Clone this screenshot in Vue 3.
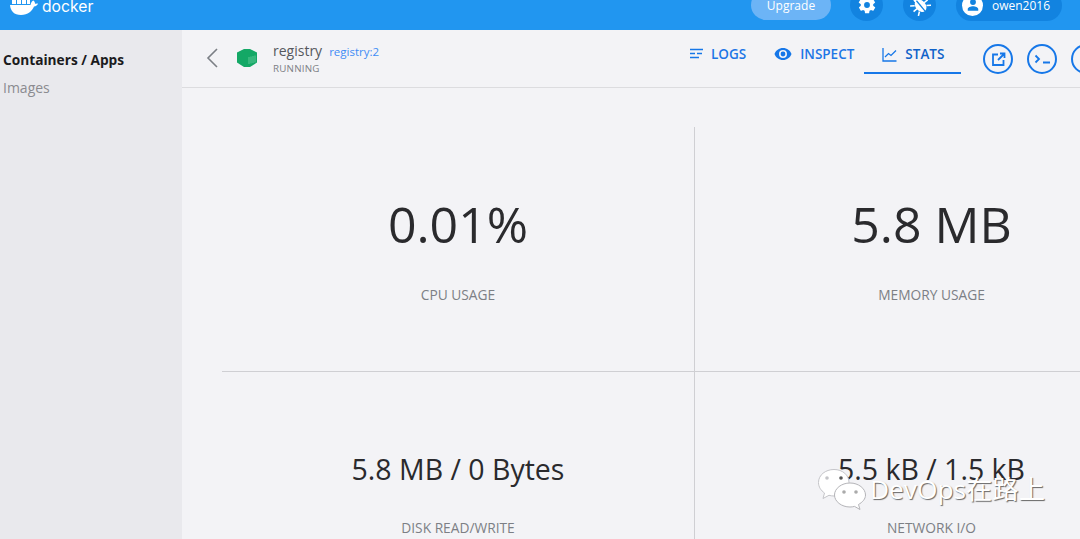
<template>
  <div class="page">
    <header class="topbar">
      <div class="logo">
        <svg class="whale" width="28" height="22" viewBox="0 0 28 22">
          <path d="M0 11h20.500c.5-2.500 1.500-4 3-4.500 1 .8 1.500 2 1.500 3.200l3-.2c-.5 1.800-2 2.800-4 3-2 4.500-6 8.500-13 8.500C4 21 .5 17 0 11z" fill="#fff" />
          <path d="M2 6h4v4H2zM7 6h4v4H7zM12 6h4v4h-4zM17 6h3v4h-3zM7 1h4v4H7zM12 1h4v4h-4z" fill="#fff" />
        </svg>
        <span class="logo-text">docker</span>
      </div>
      <div class="top-actions">
        <div class="upgrade">Upgrade</div>
        <div class="round">
          <svg width="20" height="20" viewBox="0 0 24 24"><path fill="#fff" d="M19.400 13c0-.3.100-.6.100-1s0-.7-.1-1l2.100-1.600c.2-.2.2-.4.1-.6l-2-3.500c-.1-.2-.4-.3-.6-.2l-2.500 1c-.5-.4-1.100-.7-1.700-1l-.4-2.600c0-.3-.2-.4-.5-.4h-4c-.3 0-.5.100-.5.400l-.4 2.600c-.6.300-1.200.6-1.700 1l-2.500-1c-.2-.1-.5 0-.6.200l-2 3.500c-.1.200-.1.400.1.600L4.600 11c0 .3-.1.600-.1 1s0 .7.100 1l-2.100 1.600c-.2.200-.2.400-.1.600l2 3.500c.1.200.4.300.6.200l2.500-1c.5.400 1.100.7 1.700 1l.4 2.600c0 .3.2.4.5.4h4c.3 0 .5-.1.5-.4l.4-2.600c.6-.3 1.200-.6 1.700-1l2.500 1c.2.100.5 0 .6-.2l2-3.500c.1-.2.100-.4-.1-.6zM12 15.500a3.500 3.500 0 1 1 0-7 3.500 3.500 0 0 1 0 7z" /></svg>
        </div>
        <div class="round">
          <svg width="22" height="22" viewBox="0 0 24 24">
            <g transform="rotate(-40 12 12)">
              <ellipse cx="12" cy="13" rx="5.500" ry="7.500" fill="#fff" />
              <circle cx="12" cy="5" r="2.500" fill="#fff" />
              <path d="M7 9 3 6M7 13H2M7 17l-4 3M17 9l4-3M17 13h5M17 17l4 3" stroke="#fff" stroke-width="1.700" fill="none" />
              <path d="M12 6v15" stroke="#1283e0" stroke-width="1.400" />
            </g>
          </svg>
        </div>
        <div class="account">
          <span class="avatar">
            <svg width="14" height="14" viewBox="0 0 24 24"><path fill="#1283e0" d="M12 12a5 5 0 1 0 0-10 5 5 0 0 0 0 10zm0 2c-4 0-9 2-9 5v3h18v-3c0-3-5-5-9-5z" /></svg>
          </span>
          <span>owen2016</span>
        </div>
      </div>
    </header>

    <div class="body">
      <aside class="sidebar">
        <div class="nav-item active">Containers / Apps</div>
        <div class="nav-item">Images</div>
      </aside>

      <main class="main">
        <div class="subbar">
          <svg class="back" width="14" height="22" viewBox="0 0 14 22"><path d="M12 2 3 11l9 9" fill="none" stroke="#7b7f85" stroke-width="1.600" /></svg>
          <svg class="box" width="22" height="18" viewBox="0 0 22 18">
            <path d="M8 0h6l7 3.500v10L14 18H8l-7-4.500v-10z" fill="#14a866" />
            <path d="M13 8v7M15 7.500v7M17 7v7M19 6.500v7" stroke="#63c99b" stroke-width=".9" />
          </svg>
          <div class="title-block">
            <div class="title-line">
              <span class="name">registry</span>
              <span class="tag">registry:2</span>
            </div>
            <div class="status">RUNNING</div>
          </div>

          <nav class="tabs">
            <div class="tab">
              <svg width="14" height="14" viewBox="0 0 14 14"><path d="M1 2.500h13M1 6.500h5M8 6.500h5M1 10.500h9" fill="none" stroke="#1677e8" stroke-width="1.500" /></svg>
              LOGS
            </div>
            <div class="tab">
              <svg width="18" height="14" viewBox="0 0 18 14"><path fill="#1677e8" d="M9 1C5 1 1.800 3.400.5 7c1.300 3.600 4.500 6 8.500 6s7.200-2.400 8.500-6C16.200 3.400 13 1 9 1zm0 10a4 4 0 1 1 0-8 4 4 0 0 1 0 8zm0-6.400a2.400 2.400 0 1 0 0 4.800 2.400 2.400 0 0 0 0-4.800z" /></svg>
              INSPECT
            </div>
            <div class="tab current">
              <svg width="15" height="15" viewBox="0 0 15 15"><path d="M1 1v13h13.500M3 10l3.500-3.500 2.500 2 5-5" fill="none" stroke="#1677e8" stroke-width="1.300" /></svg>
              STATS
            </div>
          </nav>

          <div class="circles">
            <div class="circle">
              <svg width="15" height="15" viewBox="0 0 15 15"><path d="M7 2.500H2v10.500h10.500V8M7 8l6-6M9 1.500h4.500V6" fill="none" stroke="#1677e8" stroke-width="1.800" /></svg>
            </div>
            <div class="circle">
              <svg width="17" height="12" viewBox="0 0 17 12"><path d="M1.500 2.500 5 6 1.500 9.500M9 9.500h7" fill="none" stroke="#1677e8" stroke-width="1.800" /></svg>
            </div>
            <div class="circle">
              <svg width="12" height="12" viewBox="0 0 12 12"><rect x="1" y="1" width="10" height="10" fill="#b9d6f7" /></svg>
            </div>
          </div>
        </div>

        <section class="stats">
          <div v-for="stat in stats" :key="stat.label" class="stat" :class="stat.cls">
            <div class="value" :class="{ small: stat.small }">{{ stat.value }}</div>
            <div class="label">{{ stat.label }}</div>
          </div>
        </section>
      </main>
    </div>

    <div class="watermark">
      <svg class="bubbles" width="48" height="41" viewBox="0 0 48 41">
        <path d="M16 .5C7.500.500.500 6 .500 13.500c0 4.500 2.500 8 6 10.500L5 29.500l6-3.200c1.500.4 3 .7 5 .7 8 0 15-6 15-13.500S24.500.500 16 .5z" fill="#fff" stroke="#c4c4c8" />
        <path d="M32 14c-8.500 0-15.500 5.500-15.500 12S23.500 38 32 38c1.500 0 3-.2 4.500-.6L42 40.500l-1.500-5c4-2.300 7-5.500 7-9.500 0-6.500-7-12-15.500-12z" fill="#fff" stroke="#b4b4b8" />
        <circle cx="9" cy="9" r="1.800" fill="#c4c4c8" />
        <circle cx="23" cy="9" r="1.800" fill="#555" />
        <circle cx="26" cy="23" r="1.800" fill="#aaa" />
        <circle cx="38" cy="23" r="1.800" fill="#aaa" />
      </svg>
      <span>DevOps在路上</span>
    </div>
  </div>
</template>

<script setup>
const stats = [
  { value: "0.01%", label: "CPU USAGE", cls: "br bb" },
  { value: "5.8 MB", label: "MEMORY USAGE", cls: "bb" },
  { value: "5.8 MB / 0 Bytes", label: "DISK READ/WRITE", cls: "br", small: true },
  { value: "5.5 kB / 1.5 kB", label: "NETWORK I/O", cls: "", small: true },
];
</script>

<style>
html,
body {
  margin: 0;
  overflow: hidden;
}
</style>

<style scoped>
.page {
  position: relative;
  width: 1080px;
  height: 539px;
  overflow: hidden;
  font-family: "Open Sans", "Noto Sans CJK SC", sans-serif;
  background: #f3f3f6;
  color: #2b2b2e;
}
.topbar {
  box-sizing: border-box;
  height: 30px;
  padding: 0 18px 20px 10px;
  background: #2196f0;
  display: flex;
  justify-content: space-between;
  align-items: center;
  color: #fff;
}
.logo {
  display: flex;
  align-items: center;
  gap: 4px;
}
.whale {
  margin-top: -1px;
}
.logo-text {
  font-family: "Inter", sans-serif;
  font-size: 15.700px;
  line-height: 18px;
  margin-top: 3px;
}
.top-actions {
  display: flex;
  align-items: center;
}
.upgrade {
  width: 80px;
  height: 30px;
  border-radius: 15px;
  background: #6cb4f6;
  font-size: 12px;
  display: flex;
  align-items: center;
  justify-content: center;
  margin-right: 19px;
}
.round {
  width: 33px;
  height: 32px;
  border-radius: 50%;
  background: #1283e0;
  display: flex;
  align-items: center;
  justify-content: center;
  margin-right: 20px;
}
.account {
  height: 31px;
  width: 106px;
  box-sizing: border-box;
  padding-left: 6px;
  border-radius: 16px;
  background: #1283e0;
  display: flex;
  align-items: center;
  gap: 9px;
  font-size: 12px;
}
.avatar {
  width: 21px;
  height: 21px;
  border-radius: 50%;
  background: #fff;
  display: flex;
  align-items: center;
  justify-content: center;
}
.body {
  display: flex;
  height: 509px;
}
.sidebar {
  width: 182px;
  flex: none;
  background: #e9e9ed;
  padding: 20px 0 0 3px;
  box-sizing: border-box;
}
.nav-item {
  font-size: 14px;
  line-height: 20px;
  margin-bottom: 8px;
  color: #8b8b90;
}
.nav-item.active {
  color: #1b1b1d;
  font-weight: 700;
  font-size: 13.700px;
}
.main {
  flex: 1;
  min-width: 0;
  display: flex;
  flex-direction: column;
}
.subbar {
  box-sizing: border-box;
  height: 58px;
  flex: none;
  display: flex;
  align-items: flex-start;
  border-bottom: 1px solid #dcdcdf;
  padding: 0 0 0 23px;
}
.back {
  flex: none;
  margin-top: 17px;
}
.box {
  flex: none;
  margin: 19px 0 0 17px;
}
.title-block {
  margin: 11px 0 0 15px;
  width: 403px;
  flex: none;
}
.title-line {
  display: flex;
  align-items: baseline;
  gap: 7px;
}
.name {
  font-size: 14px;
  line-height: 20px;
  color: #55585d;
}
.tag {
  font-size: 11.500px;
  color: #3f8cf5;
}
.status {
  font-size: 9.800px;
  line-height: 14px;
  margin-top: 1px;
  letter-spacing: 0.2px;
  color: #7d8085;
}
.tabs {
  display: flex;
  flex: none;
  height: 44px;
  margin-left: 13px;
}
.tab {
  box-sizing: border-box;
  height: 44px;
  padding-top: 14px;
  display: flex;
  align-items: flex-start;
  gap: 8px;
  font-size: 13.500px;
  line-height: 20px;
  font-weight: 600;
  color: #1d76e6;
  margin-right: 28px;
}
.tab svg {
  flex: none;
  margin-top: 3px;
}
.tab.current {
  width: 97px;
  padding-left: 18px;
  margin-left: -18px;
  margin-right: 0;
  border-bottom: 2px solid #1677e8;
  color: #0f62c9;
}
.circles {
  display: flex;
  flex: none;
  gap: 14px;
  margin: 14px 0 0 22px;
}
.circle {
  box-sizing: border-box;
  flex: none;
  width: 30px;
  height: 30px;
  border-radius: 50%;
  border: 2px solid #1677e8;
  display: flex;
  align-items: center;
  justify-content: center;
}
.stats {
  display: grid;
  grid-template-columns: 473px 473px;
  grid-template-rows: 245px 1fr;
  margin: 39px 0 0 40px;
  flex: 1;
  min-height: 0;
}
.stat {
  display: flex;
  flex-direction: column;
  align-items: center;
  box-sizing: border-box;
}
.br {
  border-right: 1px solid #cfcfd3;
}
.bb {
  border-bottom: 1px solid #cfcfd3;
}
.value {
  margin-top: 66px;
  font-size: 50px;
  line-height: 62px;
  color: #2a2a2d;
}
.value.small {
  margin-top: 78px;
  font-size: 28.500px;
  line-height: 38px;
}
.label {
  margin-top: 31px;
  font-size: 13.750px;
  line-height: 18px;
  color: #7c7f85;
}
.watermark {
  position: absolute;
  left: 818px;
  top: 468px;
  display: flex;
  align-items: center;
  color: #fff;
  font-size: 26.300px;
  line-height: 42px;
  text-shadow: 1px 1px 1px #666;
}
.bubbles {
  flex: none;
}
.watermark span {
  margin: 0 0 0 4px;
}
</style>
